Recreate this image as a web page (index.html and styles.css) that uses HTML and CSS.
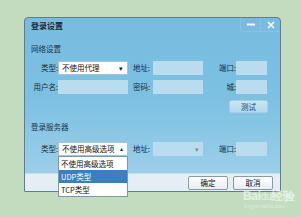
FILE: index.html
```html
<!DOCTYPE html>
<html lang="zh">
<head>
<meta charset="utf-8">
<link rel="stylesheet" href="styles.css">
</head>
<body>
<div class="dialog">
  <div class="titlebar">
    <span class="title">登录设置</span>
    <div class="controls">
      <span class="ctl">
        <svg width="8" height="3" viewBox="0 0 8 3"><rect x="0" y="0.5" width="8" height="2" fill="#f4fafd"/></svg>
      </span>
      <span class="ctl">
        <svg width="8" height="8" viewBox="0 0 8 8"><path d="M1 1L7 7M7 1L1 7" stroke="#f4fafd" stroke-width="1.6"/></svg>
      </span>
    </div>
  </div>

  <div class="section">网络设置</div>
  <div class="row first">
    <span class="lab l1">类型:</span>
    <div class="select white">不使用代理<span class="arrow">▾</span></div>
    <span class="lab l2">地址:</span>
    <div class="input f2"></div>
    <span class="lab l3">端口:</span>
    <div class="input f3"></div>
  </div>
  <div class="row">
    <span class="lab l1">用户名:</span>
    <div class="input f1"></div>
    <span class="lab l2">密码:</span>
    <div class="input f2"></div>
    <span class="lab l3">城:</span>
    <div class="input f3"></div>
  </div>
  <div class="testrow"><span class="btn test">测试</span></div>

  <div class="section second">登录服务器</div>
  <div class="row third">
    <span class="lab l1">类型:</span>
    <div class="select white open">不使用高级选项<span class="arrow up">▴</span>
      <ul class="list">
        <li>不使用高级选项</li>
        <li class="sel">UDP类型</li>
        <li>TCP类型</li>
      </ul>
    </div>
    <span class="lab l2">地址:</span>
    <div class="select blue f2"><span class="arrow grey">▾</span></div>
    <span class="lab l3">端口:</span>
    <div class="input f3"></div>
  </div>

  <div class="footer">
    <span class="btn ok">确定</span>
    <span class="btn ok">取消</span>
  </div>
</div>
<div class="watermark">
  <div class="wm-big">Bai<span class="paw">du</span>经验</div>
  <div class="wm-small">jingyan.baidu.com</div>
</div>
</body>
</html>
```
FILE: styles.css
```css
html, body {
  margin: 0;
  padding: 0;
}
body {
  width: 301px;
  height: 217px;
  background: #c3dcbf;
  font-family: "Noto Sans CJK SC", "Noto Sans", sans-serif;
  font-size: 7.5px;
  color: #1c2b36;
  overflow: hidden;
  position: relative;
  padding-top: 17px;
  padding-left: 24px;
  box-sizing: border-box;
}
.dialog {
  width: 257px;
  height: 175px;
  box-sizing: border-box;
  border: 1px solid #5f7f88;
  border-radius: 4px 4px 1px 1px;
  background: linear-gradient(to bottom, #77bbe0 0%, #7cc0e2 45%, #a4d2ea 100%);
  display: flex;
  flex-direction: column;
}
.titlebar {
  height: 16px;
  display: flex;
  justify-content: space-between;
  align-items: flex-start;
  padding-left: 6px;
}
.title {
  font-weight: bold;
  font-size: 8px;
  line-height: 16px;
}
.controls {
  display: flex;
  height: 13px;
  border-left: 1px solid #86c4e3;
  border-bottom: 1px solid #84c3e2;
  border-bottom-left-radius: 2px;
}
.ctl {
  width: 19px;
  height: 13px;
  display: flex;
  align-items: center;
  justify-content: center;
}
.ctl + .ctl {
  border-left: 1px solid #84c3e2;
}
.section {
  margin-top: 10px;
  height: 10px;
  line-height: 10px;
  padding-left: 6px;
  color: #1f3441;
}
.section.second {
  margin-top: 9px;
}
.row {
  display: flex;
  align-items: center;
  height: 14px;
  margin-top: 5px;
}
.row.first {
  margin-top: 7px;
}
.row.third {
  margin-top: 10px;
}
.lab {
  line-height: 14px;
  white-space: nowrap;
}
.l1 {
  width: 33px;
  text-align: right;
  flex: none;
}
.l2 {
  width: 25px;
  padding-left: 5px;
  box-sizing: border-box;
  flex: none;
}
.l3 {
  width: 33px;
  text-align: right;
  flex: none;
}
.input {
  height: 14px;
  background: #b9dcee;
  flex: none;
}
.f1 { width: 70px; }
.f2 { width: 50px; }
.f3 { width: 31px; }
.select {
  position: relative;
  height: 14px;
  box-sizing: border-box;
  flex: none;
  line-height: 12px;
  padding-left: 3px;
}
.select.white {
  width: 70px;
  background: #fff;
  border: 1px solid #9fc6da;
  color: #111;
}
.select.blue {
  background: #b9dcee;
}
.arrow {
  position: absolute;
  right: 4px;
  top: 0;
  font-size: 7px;
  line-height: 12px;
  color: #222;
}
.arrow.grey {
  color: #7a8e98;
  line-height: 14px;
}
.arrow.up {
  font-size: 6px;
}
.list {
  position: absolute;
  left: -1px;
  top: 13px;
  width: 70px;
  margin: 0;
  padding: 0;
  list-style: none;
  background: #fff;
  border: 1px solid #7d98a6;
  box-sizing: border-box;
  z-index: 2;
}
.list li {
  height: 13px;
  line-height: 13px;
  padding-left: 2px;
  color: #111;
}
.list li.sel {
  background: #3b7fc3;
  color: #fff;
}
.testrow {
  display: flex;
  justify-content: flex-end;
  margin-top: 6px;
  padding-right: 12px;
}
.btn {
  display: flex;
  align-items: center;
  justify-content: center;
  box-sizing: border-box;
}
.btn.test {
  width: 39px;
  height: 13px;
  background: linear-gradient(#c9e5f3, #b3d9ec);
  border: 1px solid #a6cfe4;
  border-radius: 2px;
  color: #2a4656;
}
.footer {
  margin-top: auto;
  height: 18px;
  background: #e3eff5;
  border-top: 1px solid #c9dfea;
  display: flex;
  justify-content: flex-end;
  align-items: center;
  gap: 5px;
  padding-right: 7px;
  box-sizing: border-box;
}
.btn.ok {
  width: 40px;
  height: 14px;
  background: linear-gradient(#ffffff, #e9eef1);
  border: 1px solid #8a9aa3;
  border-radius: 2px;
  color: #111;
}
.watermark {
  position: absolute;
  left: 243px;
  top: 190px;
  color: rgba(255, 255, 255, 0.6);
}
.wm-big {
  font-family: "Liberation Sans", sans-serif;
  font-size: 12px;
  line-height: 13px;
  font-weight: bold;
  letter-spacing: -0.3px;
}
.wm-big .paw {
  font-size: 10px;
  font-weight: normal;
}
.wm-small {
  font-family: "Liberation Sans", sans-serif;
  font-size: 5px;
  line-height: 6px;
  color: rgba(255, 255, 255, 0.45);
  padding-left: 1px;
}
```
